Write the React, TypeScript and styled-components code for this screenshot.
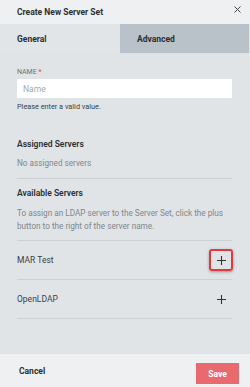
import React from "react";
import styled, { createGlobalStyle } from "styled-components";

const Global = createGlobalStyle`
  html, body { margin: 0; padding: 0; }
  body { font-family: Roboto, "Liberation Sans", sans-serif; background: #e1e4e7; }
`;

const Dialog = styled.div`
  width: 250px;
  height: 387px;
  display: flex;
  flex-direction: column;
  background: #e1e4e7;
  color: #2c3237;
`;

const Header = styled.div`
  height: 24px;
  flex: none;
  display: flex;
  align-items: center;
  justify-content: space-between;
  padding: 0 8px 0 17px;
  background: #eef0f1;
`;

const Title = styled.div`
  font-size: 8.5px;
  font-weight: 700;
  color: #2a2f33;
`;

const Close = styled.button`
  border: none;
  background: none;
  padding: 0;
  width: 10px;
  height: 10px;
  display: flex;
  align-items: center;
  justify-content: center;
  margin-top: -6px;
  color: #444;
`;

const Tabs = styled.div`
  height: 29px;
  flex: none;
  display: grid;
  grid-template-columns: 120px 1fr;
`;

const Tab = styled.div<{ $active?: boolean }>`
  display: flex;
  align-items: center;
  padding-left: 17px;
  font-size: 8.5px;
  font-weight: 700;
  color: #2a2f33;
  background: ${(p) => (p.$active ? "#e2e5e8" : "#b8c2c8")};
  margin-right: ${(p) => (p.$active ? "0" : "1px")};
`;

const Body = styled.div`
  flex: 1;
  padding: 14px 18px 0 17px;
  display: flex;
  flex-direction: column;
`;

const Label = styled.div`
  font-size: 7px;
  color: #6c7276;
  text-transform: uppercase;
  height: 10px;
  line-height: 10px;
  span { color: #e03b3b; }
`;

const Input = styled.input`
  box-sizing: border-box;
  width: 100%;
  height: 19px;
  border: none;
  background: #fff;
  padding: 0 6px;
  font-family: inherit;
  font-size: 8.5px;
  margin-top: 2px;
  outline: none;
  &::placeholder { color: #a3a8ac; }
`;

const Hint = styled.div`
  font-size: 7.3px;
  color: #3a3f43;
  margin-top: 4px;
`;

const Section = styled.div<{ $gap: number }>`
  font-size: 8.5px;
  font-weight: 600;
  color: #2a2f33;
  margin-top: ${(p) => p.$gap}px;
`;

const Muted = styled.div<{ $gap: number }>`
  font-size: 8.2px;
  color: #80868b;
  line-height: 13px;
  margin-top: ${(p) => p.$gap}px;
`;

const Divider = styled.div<{ $gap: number }>`
  height: 1px;
  background: #cdd1d5;
  margin-top: ${(p) => p.$gap}px;
`;

const Row = styled.div`
  height: 38px;
  display: flex;
  align-items: center;
  justify-content: space-between;
  border-bottom: 1px solid #cdd1d5;
  font-size: 8.5px;
  color: #3a3f43;
`;

const Plus = styled.button<{ $highlight?: boolean }>`
  box-sizing: border-box;
  width: 24px;
  height: 22px;
  margin-right: -1px;
  border-radius: 3px;
  border: 2px solid ${(p) => (p.$highlight ? "#e0393e" : "transparent")};
  box-shadow: ${(p) => (p.$highlight ? "0 1px 3px rgba(0,0,0,0.35)" : "none")};
  background: transparent;
  display: flex;
  align-items: center;
  justify-content: center;
  padding: 0;
`;

const Footer = styled.div`
  height: 33px;
  flex: none;
  display: flex;
  align-items: center;
  justify-content: space-between;
  padding: 0 11px 0 19px;
  background: #eef0f1;
`;

const Cancel = styled.button`
  border: none;
  background: none;
  padding: 0;
  font-family: inherit;
  font-size: 8.5px;
  font-weight: 700;
  color: #2a2f33;
`;

const Save = styled.button`
  border: none;
  width: 43px;
  height: 21px;
  background: #e8696e;
  color: #fff;
  font-family: inherit;
  font-size: 8.5px;
  font-weight: 700;
  margin-top: 6px;
`;

const PlusIcon = () => (
  <svg width="9" height="9" viewBox="0 0 9 9">
    <path d="M4.5 0v9M0 4.5h9" stroke="#333" strokeWidth="1.1" />
  </svg>
);

export default function App() {
  return (
    <>
      <Global />
      <Dialog>
        <Header>
          <Title>Create New Server Set</Title>
          <Close aria-label="close">
            <svg width="7" height="7" viewBox="0 0 7 7">
              <path d="M0.5 0.5l6 6M6.5 0.5l-6 6" stroke="#444" strokeWidth="1" />
            </svg>
          </Close>
        </Header>
        <Tabs>
          <Tab $active>General</Tab>
          <Tab>Advanced</Tab>
        </Tabs>
        <Body>
          <Label>
            Name <span>*</span>
          </Label>
          <Input placeholder="Name" />
          <Hint>Please enter a valid value.</Hint>
          <Section $gap={28}>Assigned Servers</Section>
          <Muted $gap={8}>No assigned servers</Muted>
          <Divider $gap={8} />
          <Section $gap={9}>Available Servers</Section>
          <Muted $gap={9}>
            To assign an LDAP server to the Server Set, click the plus button to the right of the server name.
          </Muted>
          <Divider $gap={7} />
          <Row>
            MAR Test
            <Plus $highlight aria-label="add">
              <PlusIcon />
            </Plus>
          </Row>
          <Row>
            OpenLDAP
            <Plus aria-label="add">
              <PlusIcon />
            </Plus>
          </Row>
        </Body>
        <Footer>
          <Cancel>Cancel</Cancel>
          <Save>Save</Save>
        </Footer>
      </Dialog>
    </>
  );
}
